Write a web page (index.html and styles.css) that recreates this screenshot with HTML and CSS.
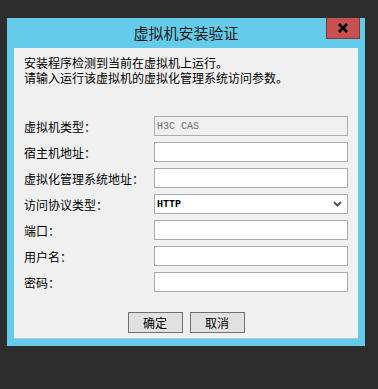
FILE: index.html
```html
<!DOCTYPE html>
<html>
<head>
<meta charset="utf-8">
<title>虚拟机安装验证</title>
<link rel="stylesheet" href="styles.css">
</head>
<body>
<div class="window">
    <div class="titlebar">
        <span class="title">虚拟机安装验证</span>
        <div class="close">
            <svg width="12" height="10" viewBox="0 0 12 10"><path d="M2 1 L10 9 M10 1 L2 9" stroke="#000" stroke-width="2.6"/></svg>
        </div>
    </div>
    <div class="client">
        <div class="intro">
            <div class="line">安装程序检测到当前在虚拟机上运行。</div>
            <div class="line">请输入运行该虚拟机的虚拟化管理系统访问参数。</div>
        </div>
        <div class="form">
            <div class="row">
                <label>虚拟机类型：</label>
                <div class="field disabled">H3C CAS</div>
            </div>
            <div class="row">
                <label>宿主机地址：</label>
                <div class="field"></div>
            </div>
            <div class="row">
                <label>虚拟化管理系统地址：</label>
                <div class="field"></div>
            </div>
            <div class="row">
                <label>访问协议类型：</label>
                <div class="field select">
                    <span>HTTP</span>
                    <svg width="9" height="6" viewBox="0 0 9 6"><path d="M1 1 L4.5 4.5 L8 1" stroke="#555" stroke-width="2" fill="none"/></svg>
                </div>
            </div>
            <div class="row">
                <label>端口：</label>
                <div class="field"></div>
            </div>
            <div class="row">
                <label>用户名：</label>
                <div class="field"></div>
            </div>
            <div class="row">
                <label>密码：</label>
                <div class="field"></div>
            </div>
        </div>
        <div class="buttons">
            <button class="btn">确定</button>
            <button class="btn">取消</button>
        </div>
    </div>
</div>
</body>
</html>
```

FILE: styles.css
```css
body {
    background-color: #2d2d2d;
    margin: 0;
    padding: 18px 0 0 7px;
    font-family: "Noto Sans CJK SC", sans-serif;
    font-size: 12px;
    color: #000;
}

.window {
    width: 358px;
    height: 328px;
    background-color: #65cbea;
    box-sizing: border-box;
    display: flex;
    flex-direction: column;
}

.titlebar {
    position: relative;
    height: 30px;
    display: flex;
    align-items: center;
    justify-content: center;
}

.title {
    font-size: 15px;
    color: #1b1b1b;
    margin-top: -1px;
}

.close {
    position: absolute;
    top: 0;
    right: 5px;
    width: 34px;
    height: 21px;
    box-sizing: border-box;
    background-color: #c75050;
    border: 1px solid #7a3b36;
    border-top: none;
    display: flex;
    align-items: center;
    justify-content: center;
}

.client {
    margin: 0 7px;
    height: 291px;
    background-color: #f0f0f0;
    padding: 8px 10px 0 10px;
    box-sizing: border-box;
    border-bottom: 1px solid #a9cfdd;
}

.intro {
    display: flex;
    flex-direction: column;
}

.intro .line {
    height: 15px;
    line-height: 14px;
    overflow: visible;
}

.form {
    margin-top: 30px;
    display: flex;
    flex-direction: column;
    gap: 6px;
}

.row {
    display: flex;
    align-items: center;
    height: 20px;
}

.row label {
    width: 130px;
}

.field {
    width: 194px;
    height: 20px;
    box-sizing: border-box;
    border: 1px solid #abadb3;
    background-color: #fff;
    font-family: "Liberation Mono", monospace;
    font-size: 10px;
    padding: 0 2px;
    display: flex;
    align-items: center;
}

.field.disabled {
    background-color: #f0f0f0;
    color: #6d6d6d;
}

.field.select {
    justify-content: space-between;
    font-weight: bold;
    padding-right: 5px;
}

.buttons {
    margin-top: 20px;
    display: flex;
    justify-content: center;
    gap: 7px;
}

.btn {
    width: 55px;
    height: 21px;
    padding: 0;
    background-color: #e1e1e1;
    border: 1px solid #707070;
    font-family: "Noto Sans CJK SC", sans-serif;
    font-size: 12px;
    color: #000;
}
```
